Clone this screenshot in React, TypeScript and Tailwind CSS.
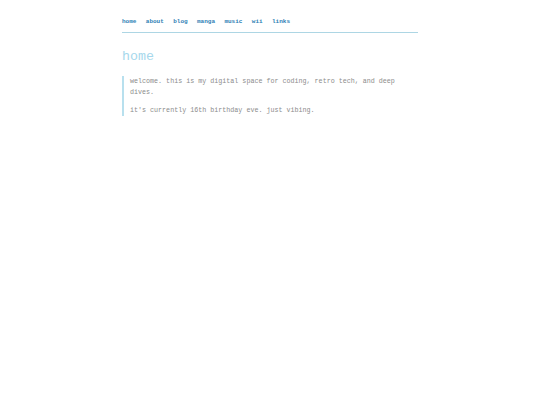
import React from "react";

export default function App() {
  const links = ["home", "about", "blog", "manga", "music", "wii", "links"];
  return (
    <div className="min-h-[405px] w-[540px] bg-white" style={{ fontFamily: '"Liberation Mono", "DejaVu Sans Mono", monospace' }}>
      <div className="ml-[122px] w-[296px] pt-[18px]">
        <nav className="flex gap-[9.4px] pb-[6px] border-b border-[#add6e4] text-[6px] leading-[8px] font-bold text-[#2f7fb5]">
          {links.map((l) => (
            <span key={l}>{l}</span>
          ))}
        </nav>
        <h1 className="mt-[16px] text-[13.3px] leading-[16px] text-[#a6d8ec]">home</h1>
        <div className="mt-[11px] border-l-[2px] border-[#b8e0ee] pl-[6px] text-[6.7px] leading-[11px] text-[#8c8c8c]">
          <p>welcome. this is my digital space for coding, retro tech, and deep dives.</p>
          <p className="mt-[7px]">it's currently 16th birthday eve. just vibing.</p>
        </div>
      </div>
    </div>
  );
}
